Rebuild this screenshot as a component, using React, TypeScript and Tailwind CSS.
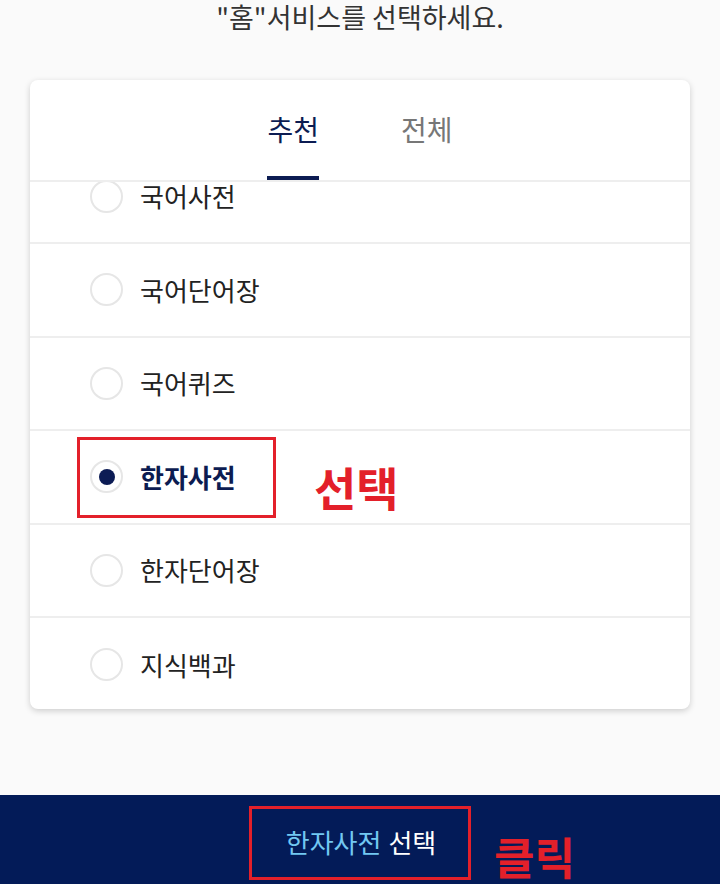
import { useState } from "react";

const ITEMS = ["국어사전", "국어단어장", "국어퀴즈", "한자사전", "한자단어장", "지식백과"];

const FONT = "font-['Noto_Sans_CJK_KR','Noto_Sans',sans-serif]";

function Radio({ checked }: { checked: boolean }) {
  return (
    <span className="flex h-[33px] w-[33px] shrink-0 items-center justify-center rounded-full border-2 border-[#e6e6e6] bg-white">
      {checked && <span className="h-[16px] w-[16px] rounded-full bg-[#0c1c55]" />}
    </span>
  );
}

export default function App() {
  const [tab, setTab] = useState<"추천" | "전체">("추천");
  const [selected, setSelected] = useState("한자사전");

  return (
    <div className={`flex h-screen flex-col overflow-hidden bg-[#fafafa] ${FONT}`}>
      {/* 안내 문구 */}
      <p className="whitespace-nowrap pt-[1px] text-center text-[27px] leading-[32px] text-[#333]">
        "홈"서비스를 선택하세요.
      </p>

      {/* 서비스 카드 */}
      <div className="mx-[30px] mt-[47px] overflow-hidden rounded-[8px] bg-white shadow-[0_2px_6px_rgba(0,0,0,0.18)]">
        <div className="flex h-[102px] items-end justify-center gap-[82px] border-b-2 border-[#eeeeee]">
          {(["추천", "전체"] as const).map((t) => (
            <button
              key={t}
              onClick={() => setTab(t)}
              className={`flex flex-col items-center text-[28px] leading-[32px] ${
                t === tab ? "text-[#0c1c52]" : "text-[#777]"
              }`}
            >
              <span>{t}</span>
              <span className={`mt-[31px] h-[4px] w-full ${t === tab ? "bg-[#0c1c52]" : "bg-transparent"}`} />
            </button>
          ))}
        </div>

        <div className="h-[527px] overflow-hidden">
          <ul className="-mt-[31.5px]">
            {ITEMS.map((item, i) => {
              const checked = item === selected;
              return (
                <li
                  key={item}
                  onClick={() => setSelected(item)}
                  className={`relative flex h-[93.5px] cursor-pointer items-center gap-[17px] pl-[60px] ${
                    i < ITEMS.length - 1 ? "border-b-2 border-[#eeeeee]" : ""
                  }`}
                >
                  <Radio checked={checked} />
                  <span
                    className={`whitespace-nowrap text-[26px] leading-[30px] ${
                      checked ? "font-bold text-[#0c1c52]" : "text-[#222]"
                    }`}
                  >
                    {item}
                  </span>
                  {checked && (
                    <>
                      <span className="pointer-events-none absolute left-[47px] top-[6px] h-[81px] w-[199px] border-[3px] border-[#e3202a]" />
                      <span className="pointer-events-none absolute left-[284px] top-[28px] whitespace-nowrap text-[46px] font-bold leading-[54px] text-[#e3202a]">
                        선택
                      </span>
                    </>
                  )}
                </li>
              );
            })}
          </ul>
        </div>
      </div>

      {/* 하단 선택 버튼 */}
      <div className="mt-auto flex h-[89px] shrink-0 justify-center bg-[#031b58] pt-[11px]">
        <div className="relative h-[74px]">
          <button className="flex h-[74px] w-[222px] items-center justify-center whitespace-nowrap border-[3px] border-[#e3202a] pb-[2px] pl-[2px] text-[26px] leading-[30px]">
            <span className="text-[#72c8f2]">{selected}</span>
            <span className="ml-[7px] text-white">선택</span>
          </button>
          <span className="pointer-events-none absolute left-[245px] top-[25px] whitespace-nowrap text-[44px] font-bold leading-[50px] text-[#e3202a]">
            클릭
          </span>
        </div>
      </div>
    </div>
  );
}
